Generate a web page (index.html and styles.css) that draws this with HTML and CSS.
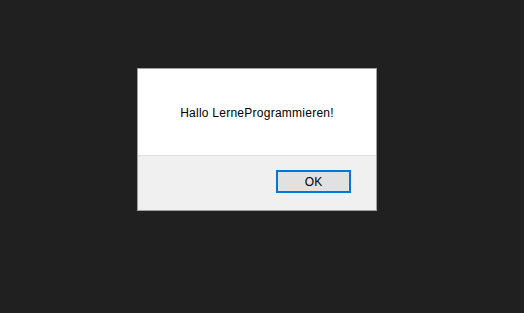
FILE: index.html
```html
<!DOCTYPE html>
<html>
<head>
<meta charset="utf-8">
<link rel="stylesheet" href="styles.css">
</head>
<body>
<div class="dialog">
  <div class="message">Hallo LerneProgrammieren!</div>
  <div class="footer">
    <button class="ok">OK</button>
  </div>
</div>
</body>
</html>
```
FILE: styles.css
```css
html, body {
  margin: 0;
  padding: 0;
  background: #202020;
  width: 524px;
  height: 313px;
  overflow: hidden;
}
body {
  padding: 68px 0 0 137px;
  box-sizing: border-box;
  font-family: "Liberation Sans", Arial, sans-serif;
}
.dialog {
  width: 240px;
  height: 143px;
  box-sizing: border-box;
  border: 1px solid #a0a0a0;
  background: #ffffff;
  display: flex;
  flex-direction: column;
}
.message {
  height: 86px;
  display: flex;
  align-items: center;
  justify-content: center;
  font-size: 12px;
  letter-spacing: 0.25px;
  color: #000;
  padding-top: 1px;
  box-sizing: border-box;
}
.footer {
  flex: 1;
  background: #f0f0f0;
  border-top: 1px solid #dfdfdf;
  display: flex;
  justify-content: flex-end;
  align-items: flex-start;
  padding: 14px 25px 0 0;
}
.ok {
  width: 75px;
  height: 23px;
  box-sizing: border-box;
  border: 2px solid #0078d7;
  background: #e1e1e1;
  font-family: "Liberation Sans", Arial, sans-serif;
  font-size: 12px;
  color: #000;
  padding: 0;
  margin: 0;
  border-radius: 0;
}
```
